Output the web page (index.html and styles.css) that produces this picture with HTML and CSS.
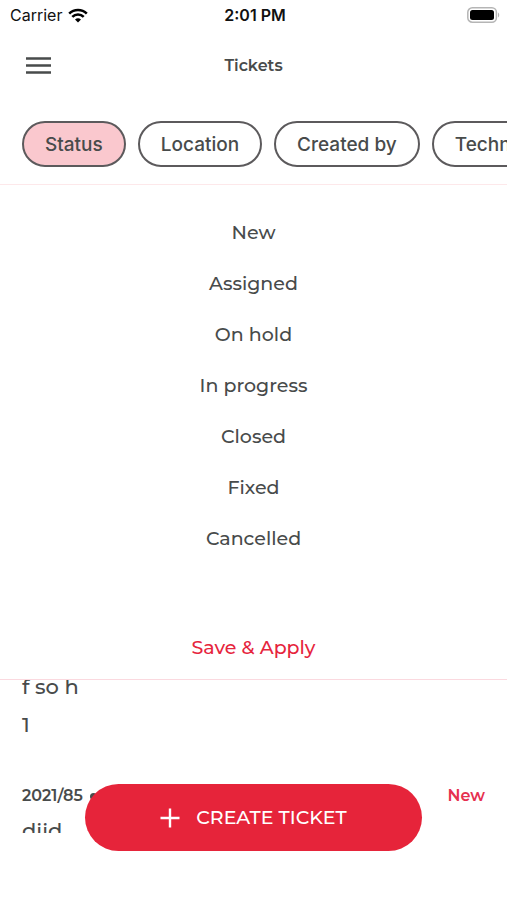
FILE: index.html
```html
<!DOCTYPE html>
<html lang="en">
  <head>
    <meta charset="UTF-8" />
    <meta name="viewport" content="width=device-width, initial-scale=1.0" />
    <title>Tickets</title>
    <link rel="stylesheet" href="styles.css" />
  </head>
  <body>
    <div class="app">
      <div class="status-bar">
        <div class="carrier">
          <span>Carrier</span>
          <svg class="wifi" viewBox="0 0 20 15" aria-hidden="true">
            <path d="M1.2 5.6a12.6 12.6 0 0 1 17.6 0" />
            <path d="M4.3 8.8a8.1 8.1 0 0 1 11.4 0" />
            <path class="wifi-dot" d="M10 14.6l-3-3a4.3 4.3 0 0 1 6 0z" />
          </svg>
        </div>
        <div class="time">2:01 PM</div>
        <svg class="battery" viewBox="0 0 33 16" aria-hidden="true">
          <rect x="0.8" y="0.8" width="28.6" height="14.4" rx="4.5" fill="#fff" stroke="#b5b5b5" stroke-width="1.5" />
          <rect x="3" y="3" width="24" height="10" rx="2.5" />
          <path d="M31 5.5c1.6.8 1.6 4.2 0 5z" fill="#b5b5b5" />
        </svg>
      </div>

      <header class="header">
        <button type="button" class="menu-button" aria-label="Menu">
          <svg viewBox="0 0 25 17" aria-hidden="true">
            <path d="M0 1.5h25M0 8.5h25M0 15.5h25" />
          </svg>
        </button>
        <h1>Tickets</h1>
      </header>

      <nav class="filters">
        <button type="button" class="chip active">Status</button>
        <button type="button" class="chip">Location</button>
        <button type="button" class="chip">Created by</button>
        <button type="button" class="chip">Technician</button>
      </nav>

      <section class="panel">
        <button type="button" class="option">New</button>
        <button type="button" class="option">Assigned</button>
        <button type="button" class="option">On hold</button>
        <button type="button" class="option">In progress</button>
        <button type="button" class="option">Closed</button>
        <button type="button" class="option">Fixed</button>
        <button type="button" class="option">Cancelled</button>
        <button type="button" class="apply">Save &amp; Apply</button>
      </section>

      <main class="list">
        <article class="ticket scrolled">
          <p>f so h</p>
          <p>1</p>
        </article>
        <article class="ticket">
          <div class="ticket-head">
            <span class="ticket-number">2021/85 <span class="dot"></span></span>
            <span class="ticket-status">New</span>
          </div>
          <p>diid</p>
        </article>
      </main>

      <footer class="footer">
        <button type="button" class="create">
          <svg viewBox="0 0 20 20" aria-hidden="true">
            <path d="M10 0.5v19M0.5 10h19" />
          </svg>
          CREATE TICKET
        </button>
      </footer>
    </div>
  </body>
</html>
```
FILE: styles.css
```css
* {
  box-sizing: border-box;
}
body {
  margin: 0;
  background-color: #fff;
  color: #484b4b;
  font-family: Montserrat, Inter, sans-serif;
  font-weight: 500;
}
button {
  padding: 0;
  border: none;
  background: none;
  color: inherit;
  font: inherit;
  cursor: pointer;
}
h1,
p {
  margin: 0;
}
.app {
  display: flex;
  flex-direction: column;
  height: 100vh;
  overflow: hidden;
}
.status-bar {
  display: grid;
  grid-template-columns: 1fr auto 1fr;
  align-items: center;
  height: 30px;
  padding: 0 7px 0 10px;
  color: #111;
  font-family: Inter, sans-serif;
  font-size: 16px;
  font-weight: 400;
}
.carrier {
  display: flex;
  align-items: center;
  gap: 6px;
}
.wifi {
  width: 20px;
  height: 15px;
  fill: none;
  stroke: #000;
  stroke-width: 2.6;
}
.wifi .wifi-dot {
  fill: #000;
  stroke: none;
}
.time {
  font-weight: 600;
}
.battery {
  width: 33px;
  height: 16px;
  justify-self: end;
}
.header {
  display: grid;
  grid-template-columns: 1fr auto 1fr;
  align-items: center;
  height: 71px;
  padding: 0 26px;
}
.header h1 {
  font-size: 16px;
  font-weight: 600;
}
.menu-button {
  justify-self: start;
  height: 17px;
}
.menu-button svg {
  display: block;
  width: 25px;
  height: 17px;
  stroke: #484b4b;
  stroke-width: 2.6;
}
.filters {
  display: flex;
  gap: 12px;
  padding: 20px 22px 17px;
  border-bottom: 1px solid #fde8ea;
  overflow: hidden;
}
.chip {
  flex: none;
  height: 46px;
  padding: 0 21px;
  border: 2px solid #5c5a5c;
  border-radius: 23px;
  font-family: Inter, sans-serif;
  font-size: 19px;
}
.chip.active {
  background-color: #fac8ce;
}
.panel {
  display: flex;
  flex-direction: column;
  align-items: center;
  padding: 22px 0 6px;
  border-bottom: 1px solid #fbd9df;
}
.option,
.apply {
  height: 51px;
  font-size: 19px;
}
.apply {
  margin-top: 58px;
  color: #e6243d;
}
.list {
  flex: 1;
  min-height: 0;
  overflow: hidden;
}
.ticket {
  padding: 0 22px 36px;
  font-size: 21px;
  line-height: 38px;
}
.ticket.scrolled {
  margin-top: -12px;
}
.ticket-head {
  display: flex;
  justify-content: space-between;
  font-size: 16px;
  font-weight: 600;
  line-height: 32px;
}
.ticket-number {
  display: flex;
  align-items: center;
  gap: 7px;
}
.dot {
  width: 7px;
  height: 7px;
  border-radius: 50%;
  background-color: #484b4b;
}
.ticket-status {
  color: #e6304f;
}
.footer {
  position: relative;
  flex: none;
  height: 67px;
}
/* floats over the end of the list */
.create {
  position: absolute;
  right: 85px;
  bottom: 49px;
  left: 85px;
  display: flex;
  align-items: center;
  justify-content: center;
  gap: 16px;
  height: 67px;
  border-radius: 34px;
  background-color: #e6243a;
  color: #fff;
  font-size: 19px;
}
.create svg {
  width: 20px;
  height: 20px;
  stroke: #fff;
  stroke-width: 2.4;
}
```
